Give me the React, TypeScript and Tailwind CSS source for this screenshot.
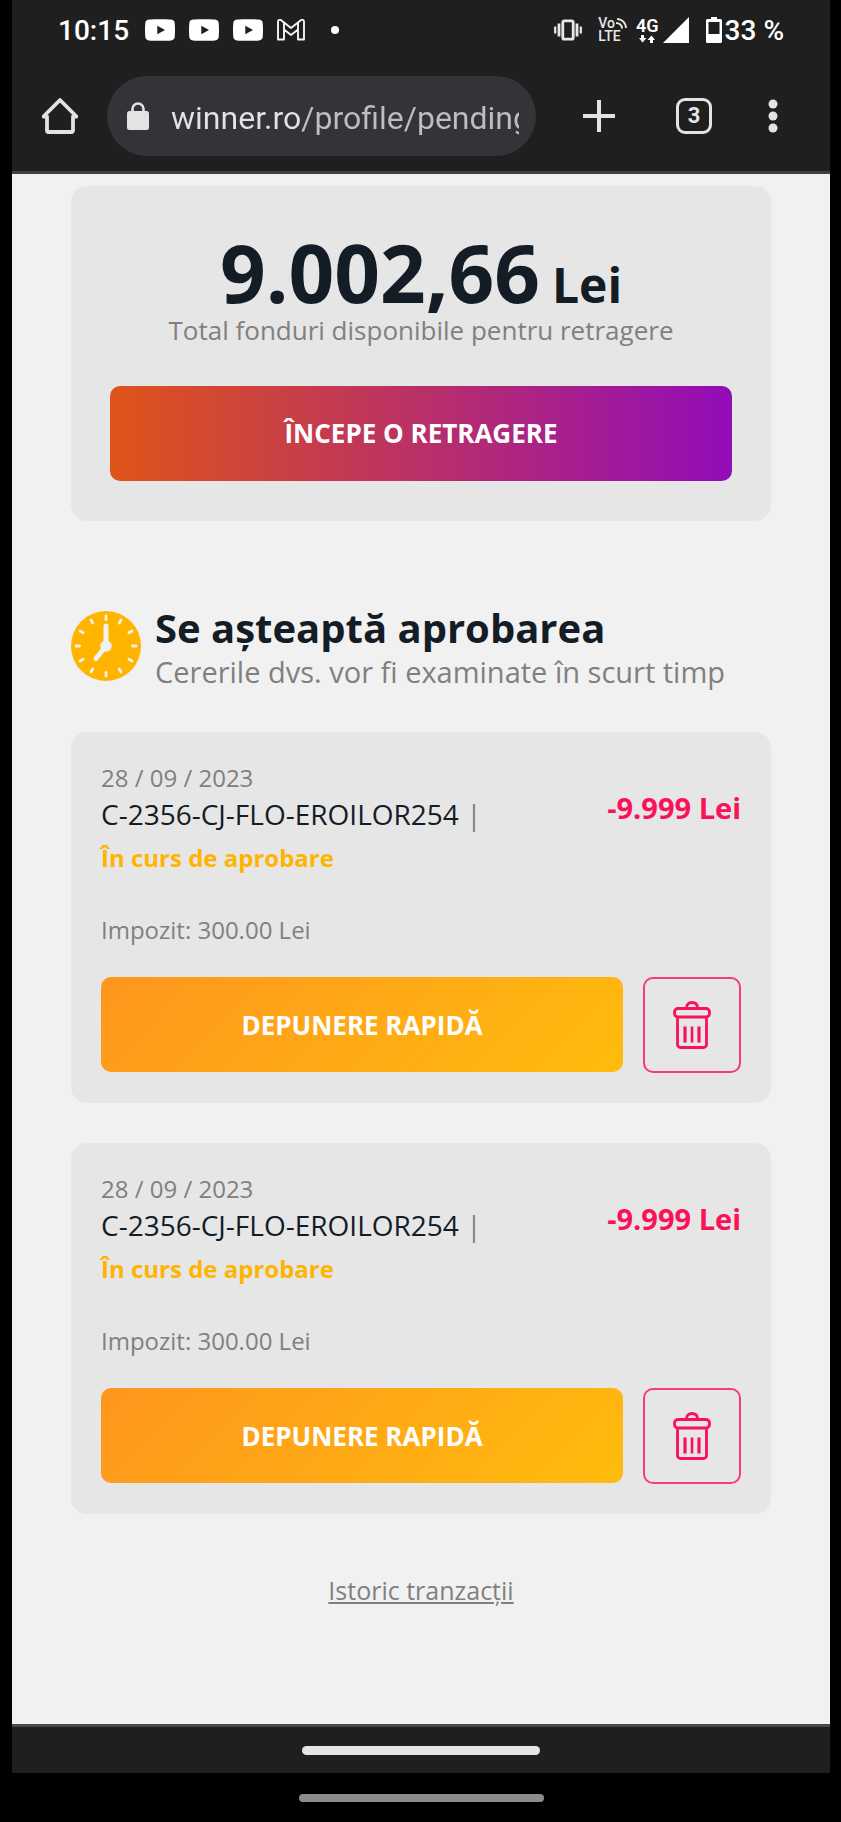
import { useState } from 'react'

type Withdrawal = {
  id: number
  date: string
  code: string
  amount: string
  status: string
  tax: string
}

const initialWithdrawals: Withdrawal[] = [
  {
    id: 1,
    date: '28 / 09 / 2023',
    code: 'C-2356-CJ-FLO-EROILOR254',
    amount: '-9.999 Lei',
    status: 'În curs de aprobare',
    tax: 'Impozit: 300.00 Lei'
  },
  {
    id: 2,
    date: '28 / 09 / 2023',
    code: 'C-2356-CJ-FLO-EROILOR254',
    amount: '-9.999 Lei',
    status: 'În curs de aprobare',
    tax: 'Impozit: 300.00 Lei'
  }
]

function YoutubeIcon() {
  return (
    <svg width="30" height="22" viewBox="0 0 30 22" aria-hidden="true">
      <path
        fill="#fff"
        fillRule="evenodd"
        d="M4 .6C9 0 21 0 26 .6c2.4.3 3.5 1.4 3.7 3.6.4 4.5.4 9.1 0 13.6-.2 2.200-1.300 3.300-3.700 3.600-5 .6-17 .6-22 0C1.600 21.100.5 20 .3 17.800c-.4-4.500-.4-9.100 0-13.600C.5 2 1.600.9 4 .6ZM12.300 6.800v8.400L20 11Z"
      />
    </svg>
  )
}

function GmailIcon() {
  return (
    <svg width="28" height="22" viewBox="0 0 28 22" fill="none" stroke="#f4f4f4" strokeWidth="1.9" strokeLinejoin="round" aria-hidden="true">
      <path d="M1 20.500V2.500C1 .8 3 .3 4.500 1.500L14 9l9.500-7.500C25 .3 27 .8 27 2.500v18h-6V10.500L14 16 7 10.500v10Z" />
      <path d="M7 10.500V4M21 10.500V4" />
    </svg>
  )
}

function VibrateIcon() {
  return (
    <svg width="28" height="22" viewBox="0 0 28 22" fill="none" stroke="#e8e8e8" aria-hidden="true">
      <rect x="8.800" y="1.800" width="10.400" height="18.400" rx="1.500" strokeWidth="2.800" />
      <path strokeWidth="2.800" d="M5 4.500v13M23 4.500v13" />
      <path strokeWidth="2.200" d="M1.200 7.500v7M26.800 7.500v7" />
    </svg>
  )
}

function WavesIcon() {
  return (
    <svg width="12" height="11" viewBox="0 0 12 11" fill="none" stroke="#e8e8e8" strokeWidth="2" aria-hidden="true">
      <path d="M2 1c5 0 9 4 9 9M1 5c3.500 0 6 2.200 6 5.500" />
    </svg>
  )
}

function DataArrowsIcon() {
  return (
    <svg width="16" height="8" viewBox="0 0 16 8" fill="#fff" aria-hidden="true">
      <path d="M2 0h3v3H7.500L3.500 7.500 0 3h2ZM11 8h3V5h2L12.500.5 8.500 5H11Z" />
    </svg>
  )
}

function SignalIcon() {
  return (
    <svg width="26" height="26" viewBox="0 0 26 26" fill="#fff" aria-hidden="true">
      <path d="M26 0v26H0Z" />
    </svg>
  )
}

function BatteryIcon() {
  return (
    <svg width="16" height="26" viewBox="0 0 16 26" fill="#fff" aria-hidden="true">
      <path fillRule="evenodd" d="M5 0h6v2h3.500a1.500 1.500 0 0 1 1.500 1.500v21a1.500 1.500 0 0 1-1.500 1.500h-13A1.500 1.500 0 0 1 0 24.500v-21A1.500 1.500 0 0 1 1.500 2H5ZM2.500 5v12h11V5Z" />
    </svg>
  )
}

function HomeIcon() {
  return (
    <svg width="36" height="36" viewBox="0 0 36 36" fill="none" stroke="#e3e3e3" strokeWidth="3.800" strokeLinejoin="round" aria-hidden="true">
      <path d="M1.500 18.500 18 2l16.500 16.500H31V32.500a1.500 1.500 0 0 1-1.500 1.500h-23A1.500 1.500 0 0 1 5 32.500V18.500Z" />
    </svg>
  )
}

function LockIcon() {
  return (
    <svg width="22" height="28" viewBox="0 0 22 28" aria-hidden="true">
      <rect x="0" y="9" width="22" height="19" rx="2.500" fill="#e3e3e3" />
      <path d="M5.500 11V7a5.500 5.500 0 0 1 11 0v4" fill="none" stroke="#e3e3e3" strokeWidth="2.600" />
    </svg>
  )
}

function PlusIcon() {
  return (
    <svg width="32" height="32" viewBox="0 0 32 32" stroke="#e3e3e3" strokeWidth="4" aria-hidden="true">
      <path d="M16 0v32M0 16h32" />
    </svg>
  )
}

function MoreIcon() {
  return (
    <svg width="10" height="34" viewBox="0 0 10 34" fill="#e3e3e3" aria-hidden="true">
      <circle cx="5" cy="5" r="4.500" />
      <circle cx="5" cy="17" r="4.500" />
      <circle cx="5" cy="29" r="4.500" />
    </svg>
  )
}

function ClockIcon() {
  const ticks = Array.from({ length: 12 }, (_, i) => i * 30)

  return (
    <svg className="shrink-0" width="70" height="70" viewBox="0 0 70 70" aria-hidden="true">
      <circle cx="35" cy="35" r="35" fill="#ffb400" />
      <g stroke="#f1f1f1" strokeLinecap="round">
        {ticks.map((deg) => (
          <path key={deg} d="M35 5v3.500" strokeWidth="2.800" transform={`rotate(${deg} 35 35)`} />
        ))}
        <path d="M35 35V15" strokeWidth="5" />
        <path d="M35 35 25 47.500" strokeWidth="5" />
      </g>
      <circle cx="35" cy="35" r="5.800" fill="#f1f1f1" />
    </svg>
  )
}

function TrashIcon() {
  return (
    <svg width="38" height="48" viewBox="0 0 38 48" fill="none" stroke="#fa1159" strokeWidth="2.800" aria-hidden="true">
      <path d="M13.500 7c0-3.300 2-5.500 5.500-5.500s5.500 2.200 5.500 5.500" />
      <rect x="1.500" y="7.500" width="35" height="8.500" rx="3.500" />
      <path d="M4.500 16v27.500a3 3 0 0 0 3 3h23a3 3 0 0 0 3-3V16" />
      <path strokeWidth="3.200" d="M12 25.500v16M26 25.500v16" />
      <path strokeWidth="2.600" d="M19 25.500v16" />
    </svg>
  )
}

function StatusBar() {
  return (
    <div className="flex h-[60px] items-center justify-between px-[46px] text-[28px] font-medium text-white">
      <div className="flex items-center">
        <span className="pt-0.5">10:15</span>
        <div className="ml-4 flex items-center gap-[14px]">
          <YoutubeIcon />
          <YoutubeIcon />
          <YoutubeIcon />
          <GmailIcon />
        </div>
        <span className="ml-[26px] size-2 rounded-full bg-white" />
      </div>

      <div className="flex items-center">
        <VibrateIcon />
        <div className="ml-4 flex flex-col text-[14px] leading-[13px] text-[#e8e8e8]">
          <span className="flex items-center">
            Vo
            <WavesIcon />
          </span>
          <span>LTE</span>
        </div>
        <div className="ml-[9px] flex flex-col items-center text-[18px] leading-[18px] font-semibold">
          <span>4G</span>
          <DataArrowsIcon />
        </div>
        <div className="ml-1 flex items-center gap-[17px]">
          <SignalIcon />
          <BatteryIcon />
        </div>
        <span className="ml-[3px] pt-0.5">33 %</span>
      </div>
    </div>
  )
}

function Toolbar() {
  return (
    <div className="flex h-[111px] items-center px-[30px]">
      <button type="button" aria-label="Acasă">
        <HomeIcon />
      </button>
      <div className="ml-[29px] flex h-20 min-w-0 flex-1 items-center gap-[22px] rounded-full bg-[#333438] pr-[17px] pl-5">
        <LockIcon />
        <input
          type="text"
          aria-label="Adresă"
          defaultValue="winner.ro/profile/pending"
          className="min-w-0 flex-1 bg-linear-to-r from-[#e3e3e3] from-[132px] to-[#bdbec0] to-[132px] bg-clip-text pt-1 text-[32px] leading-10 text-transparent outline-none"
        />
      </div>
      <button type="button" aria-label="Filă nouă" className="ml-[47px]">
        <PlusIcon />
      </button>
      <button
        type="button"
        aria-label="Comută între file"
        className="ml-[61px] flex size-9 items-center justify-center rounded-[9px] border-3 border-[#e3e3e3] text-[22px] font-bold text-[#e3e3e3]"
      >
        3
      </button>
      <button type="button" aria-label="Mai multe opțiuni" className="mr-[22px] ml-14">
        <MoreIcon />
      </button>
    </div>
  )
}

function Balance() {
  return (
    <section className="rounded-2xl bg-[#e6e6e6] px-[39px] pt-[46px] pb-10 text-center">
      <p className="flex items-baseline justify-center gap-3 font-bold text-[#141d26]">
        <span className="text-[80px] leading-[80px]">9.002,66</span>
        <span className="text-[48px] leading-none">Lei</span>
      </p>
      <p className="text-[26px] leading-9 text-[#808080]">Total fonduri disponibile pentru retragere</p>
      <button
        type="button"
        className="mt-[38px] h-[95px] w-full rounded-[10px] bg-linear-to-r/srgb from-[#df5418] to-[#930cb8] text-[26px] font-bold text-white"
      >
        ÎNCEPE O RETRAGERE
      </button>
    </section>
  )
}

function WithdrawalCard({ item, onDelete }: { item: Withdrawal; onDelete: (id: number) => void }) {
  return (
    <article className="rounded-2xl bg-[#e6e6e6] px-[30px] pt-7 pb-[30px] text-[24px] leading-9 text-[#808080]">
      <div className="flex items-start justify-between">
        <div>
          <p>{item.date}</p>
          <p className="text-[28px]">
            <span className="text-[#141d26]">{item.code}</span> |
          </p>
          <p className="mt-2 font-bold text-[#ffb400]">{item.status}</p>
        </div>
        <p className="pt-[30px] text-[29px] font-bold text-[#fa1159]">{item.amount}</p>
      </div>
      <p className="mt-9">{item.tax}</p>
      <div className="mt-[29px] flex items-start gap-5">
        <button
          type="button"
          className="h-[95px] flex-1 rounded-[10px] bg-linear-135/srgb from-[#ff961e] to-[#ffbc0d] text-[26px] font-bold text-white"
        >
          DEPUNERE RAPIDĂ
        </button>
        <button
          type="button"
          aria-label="Șterge"
          onClick={() => onDelete(item.id)}
          className="flex h-24 w-[98px] items-center justify-center rounded-[10px] border-2 border-[#fa3b75]"
        >
          <TrashIcon />
        </button>
      </div>
    </article>
  )
}

export default function App() {
  const [withdrawals, setWithdrawals] = useState(initialWithdrawals)

  const handleDelete = (id: number) => {
    setWithdrawals((items) => items.filter((item) => item.id !== id))
  }

  return (
    <div className="min-h-screen bg-black pr-[11px] pl-3">
      <header className="border-b-3 border-[#3f4142] bg-[#1f1f1f] font-[Roboto,sans-serif]">
        <StatusBar />
        <Toolbar />
      </header>

      <main className="bg-[#f1f1f1] px-[59px] pt-3 pb-[116px] font-['Open_Sans',sans-serif]">
        <Balance />

        {/* Pending approval */}
        <section className="mt-[83px]">
          <div className="flex items-center gap-[14px]">
            <ClockIcon />
            <div>
              <h1 className="text-[40px] leading-[48px] font-bold text-[#141d26]">Se așteaptă aprobarea</h1>
              <p className="mt-1 text-[29px] leading-8 text-[#808080]">Cererile dvs. vor fi examinate în scurt timp</p>
            </div>
          </div>

          <div className="mt-11 flex flex-col gap-10">
            {withdrawals.map((item) => (
              <WithdrawalCard key={item.id} item={item} onDelete={handleDelete} />
            ))}
          </div>
        </section>

        <div className="mt-[58px] text-center">
          <a href="#istoric" className="text-[25px] leading-9 text-[#808080] underline">
            Istoric tranzacții
          </a>
        </div>
      </main>

      {/* Gesture bars */}
      <div className="flex h-[49px] items-center justify-center border-t-3 border-[#48494a] bg-[#1f1f1f]">
        <div className="h-[9px] w-[238px] rounded-full bg-[#e6e6e6]" />
      </div>
      <div className="flex h-[49px] items-center justify-center">
        <div className="h-2 w-[245px] rounded-full bg-[#8c8c8c]" />
      </div>
    </div>
  )
}
